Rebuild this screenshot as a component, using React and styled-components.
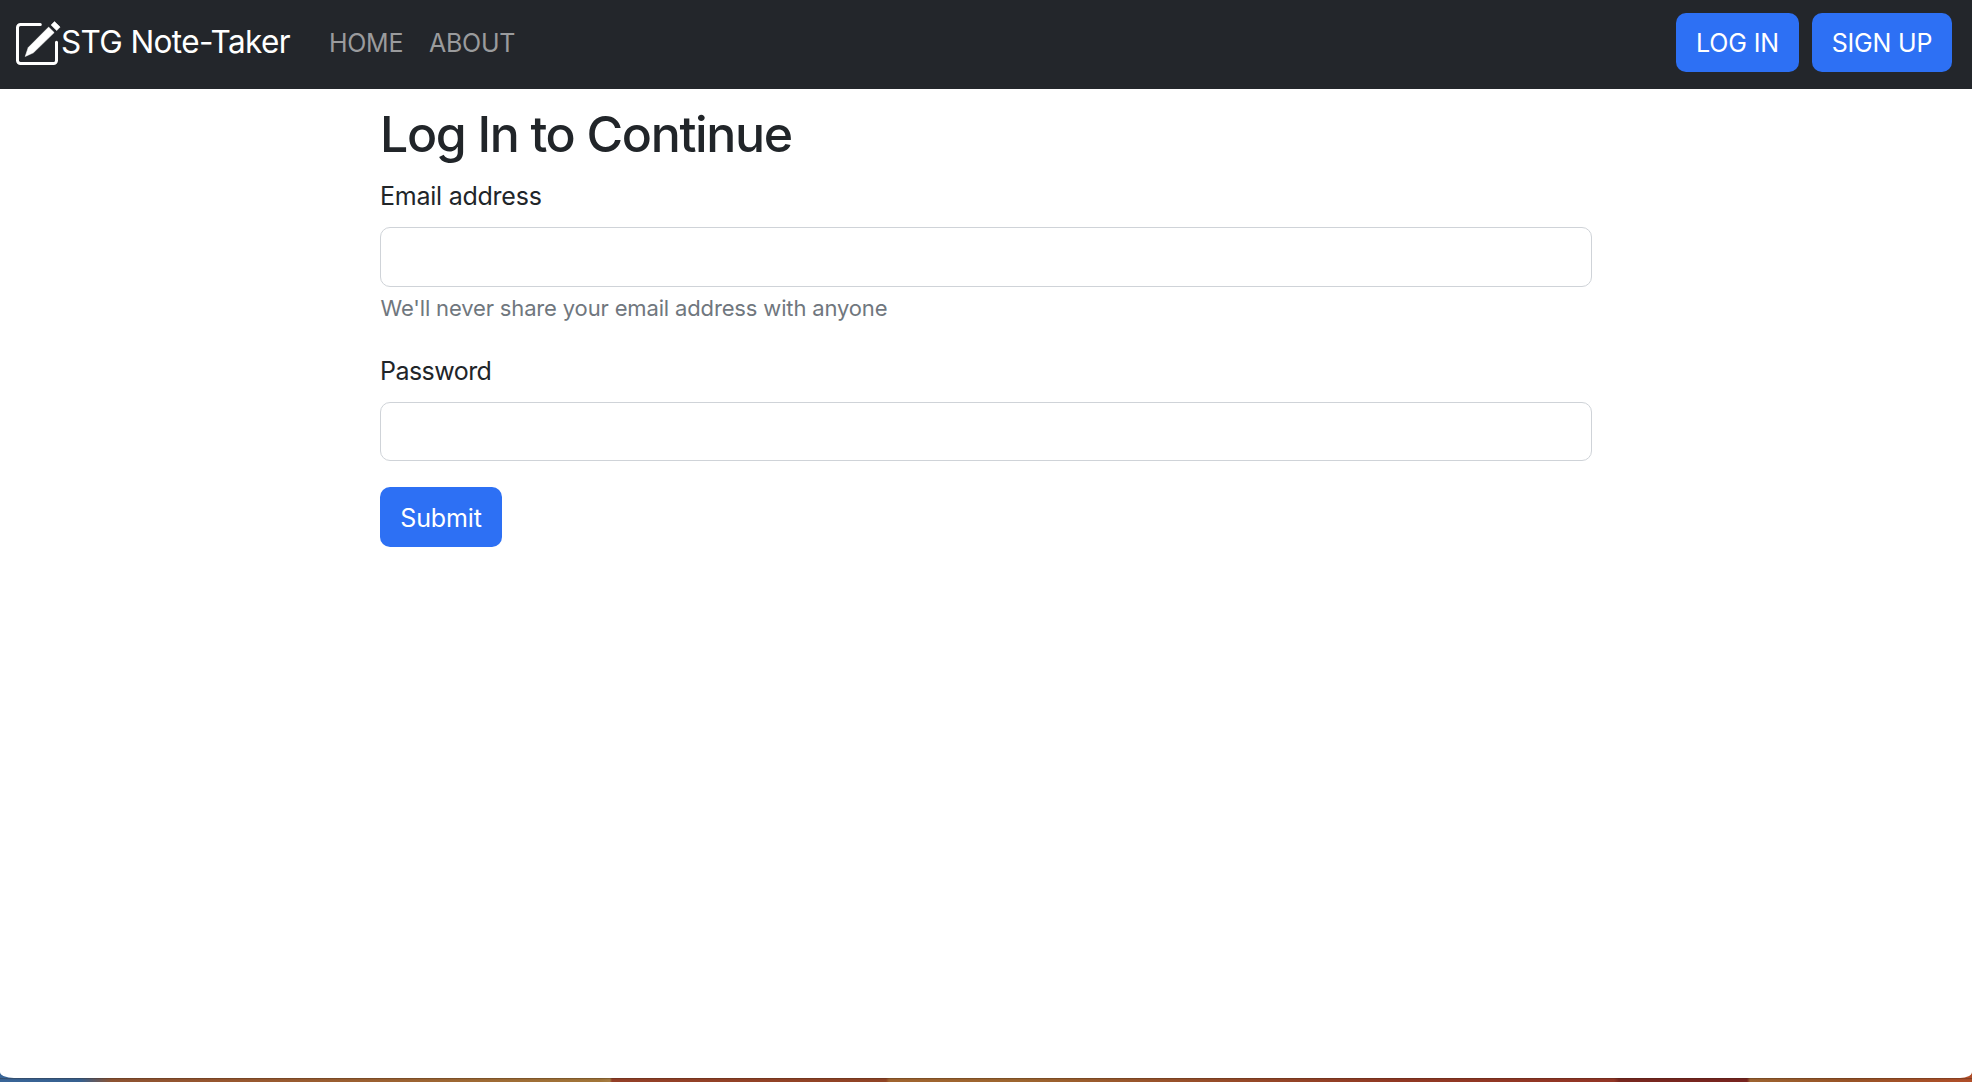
import React from 'react';
import styled, { createGlobalStyle } from 'styled-components';

const GlobalStyle = createGlobalStyle`
  *, *::before, *::after { box-sizing: border-box; }
  html, body { margin: 0; height: 100%; overflow: hidden; }
  body {
    font-family: Inter, "Liberation Sans", sans-serif;
    font-size: 25px;
    color: #212529;
    background: #fff;
  }
`;

const Desktop = styled.div`
  height: 1082px;
  padding-bottom: 4px;
  background:
    linear-gradient(
      to bottom,
      transparent 1078px,
      rgba(40, 25, 15, 0.45) 1078px,
      rgba(40, 25, 15, 0.12) 1079px,
      transparent 1080px
    ),
    linear-gradient(
      to right,
      #396598 0,
      #36608f 80px,
      #8d5331 112px,
      #97562f 220px,
      #9c6231 400px,
      #a17538 600px,
      #a67d42 610px,
      #943f27 612px,
      #914425 886px,
      #a0642f 889px,
      #9d652f 1020px,
      #98502a 1180px,
      #913823 1400px,
      #933525 1614px,
      #78271f 1619px,
      #78241f 1747px,
      #9d6330 1750px,
      #985326 1850px,
      #b04e29 1972px
    );
`;

const Window = styled.div`
  height: 1078px;
  overflow: hidden;
  background: #fff;
  border-radius: 0 0 12px 14px / 0 0 6px 6px;
`;

const Navbar = styled.header`
  display: flex;
  align-items: flex-start;
  height: 89px;
  padding: 13px 20px 0 16px;
  background: #23262b;
`;

const Brand = styled.a`
  display: flex;
  align-items: flex-start;
  width: 313px;
  color: #fff;
  font-size: 31.5px;
  line-height: 57px;
  letter-spacing: -0.62px;
  white-space: nowrap;
`;

const BrandIcon = styled.svg`
  flex: none;
  width: 45px;
  height: 46px;
  margin-top: 7px;
`;

const NavLinks = styled.nav`
  display: flex;
  gap: 26px;
  padding-top: 1px;
`;

const NavLink = styled.a`
  color: #9a9b9d;
  line-height: 58px;
  letter-spacing: -0.3px;
`;

const Actions = styled.div`
  display: flex;
  gap: 13px;
  margin-left: auto;
`;

const Button = styled.button`
  display: block;
  width: ${(p) => p.$width}px;
  height: ${(p) => p.$height || 59}px;
  padding: ${(p) => (p.$height ? 2 : 1)}px 0 0;
  border: 0;
  border-radius: 10px;
  background: #2d70f4;
  color: #fff;
  font: inherit;
  line-height: 58px;
  letter-spacing: -0.16px;
  text-align: center;
`;

const Container = styled.main`
  width: 1212px;
  margin: 0 auto;
  padding-top: 14px;
`;

const Title = styled.h1`
  margin: 0 0 12px;
  font-size: 50px;
  font-weight: 500;
  line-height: 62px;
  letter-spacing: -1.34px;
`;

const Field = styled.div`
  margin-bottom: ${(p) => p.$after}px;
`;

const Label = styled.label`
  display: block;
  margin: 0 0 12px;
  line-height: 38px;
  letter-spacing: ${(p) => p.$tracking}px;
`;

const Input = styled.input`
  display: block;
  width: 100%;
  height: ${(p) => p.$height}px;
  padding: 0 20px;
  border: 1px solid #cfd3d8;
  border-radius: 10px;
  background: #fff;
  font: inherit;
  outline: none;
`;

const Help = styled.div`
  margin-top: 4px;
  padding-left: 0.5px;
  color: #70777e;
  font-size: 22px;
  line-height: 34px;
  letter-spacing: -0.15px;
`;

function PencilSquare() {
  return (
    <BrandIcon viewBox="16 20 45 46" fill="none" aria-hidden="true">
      <path
        d="M40.3 24.5H20.5a3 3 0 0 0-3 3v33a3 3 0 0 0 3 3h33a3 3 0 0 0 3-3V42.3"
        stroke="#fff"
        strokeWidth="3"
        strokeLinecap="round"
      />
      <path d="M48.6 27.1 54.2 32.6 33.4 52.8 25.2 56.5 28.2 47.6Z" fill="#fff" stroke="#fff" strokeWidth="0.5" strokeLinejoin="round" />
      <path d="M51.1 25 54.5 21.6 60.1 27 56.7 30.6Z" fill="#fff" stroke="#fff" strokeWidth="0.6" strokeLinejoin="round" />
    </BrandIcon>
  );
}

export default function App() {
  return (
    <Desktop>
      <GlobalStyle />
      <Window>
        <Navbar>
          <Brand>
            <PencilSquare />
            STG Note-Taker
          </Brand>
          <NavLinks>
            <NavLink>HOME</NavLink>
            <NavLink>ABOUT</NavLink>
          </NavLinks>
          <Actions>
            <Button $width={123}>LOG IN</Button>
            <Button $width={140}>SIGN UP</Button>
          </Actions>
        </Navbar>
        <Container>
          <Title>Log In to Continue</Title>
          <Field $after={27}>
            <Label htmlFor="email" $tracking={-0.24}>Email address</Label>
            <Input id="email" type="email" $height={60} />
            <Help>We'll never share your email address with anyone</Help>
          </Field>
          <Field $after={26}>
            <Label htmlFor="password" $tracking={-0.54}>Password</Label>
            <Input id="password" type="password" $height={59} />
          </Field>
          <Button type="submit" $width={122} $height={60}>Submit</Button>
        </Container>
      </Window>
    </Desktop>
  );
}
